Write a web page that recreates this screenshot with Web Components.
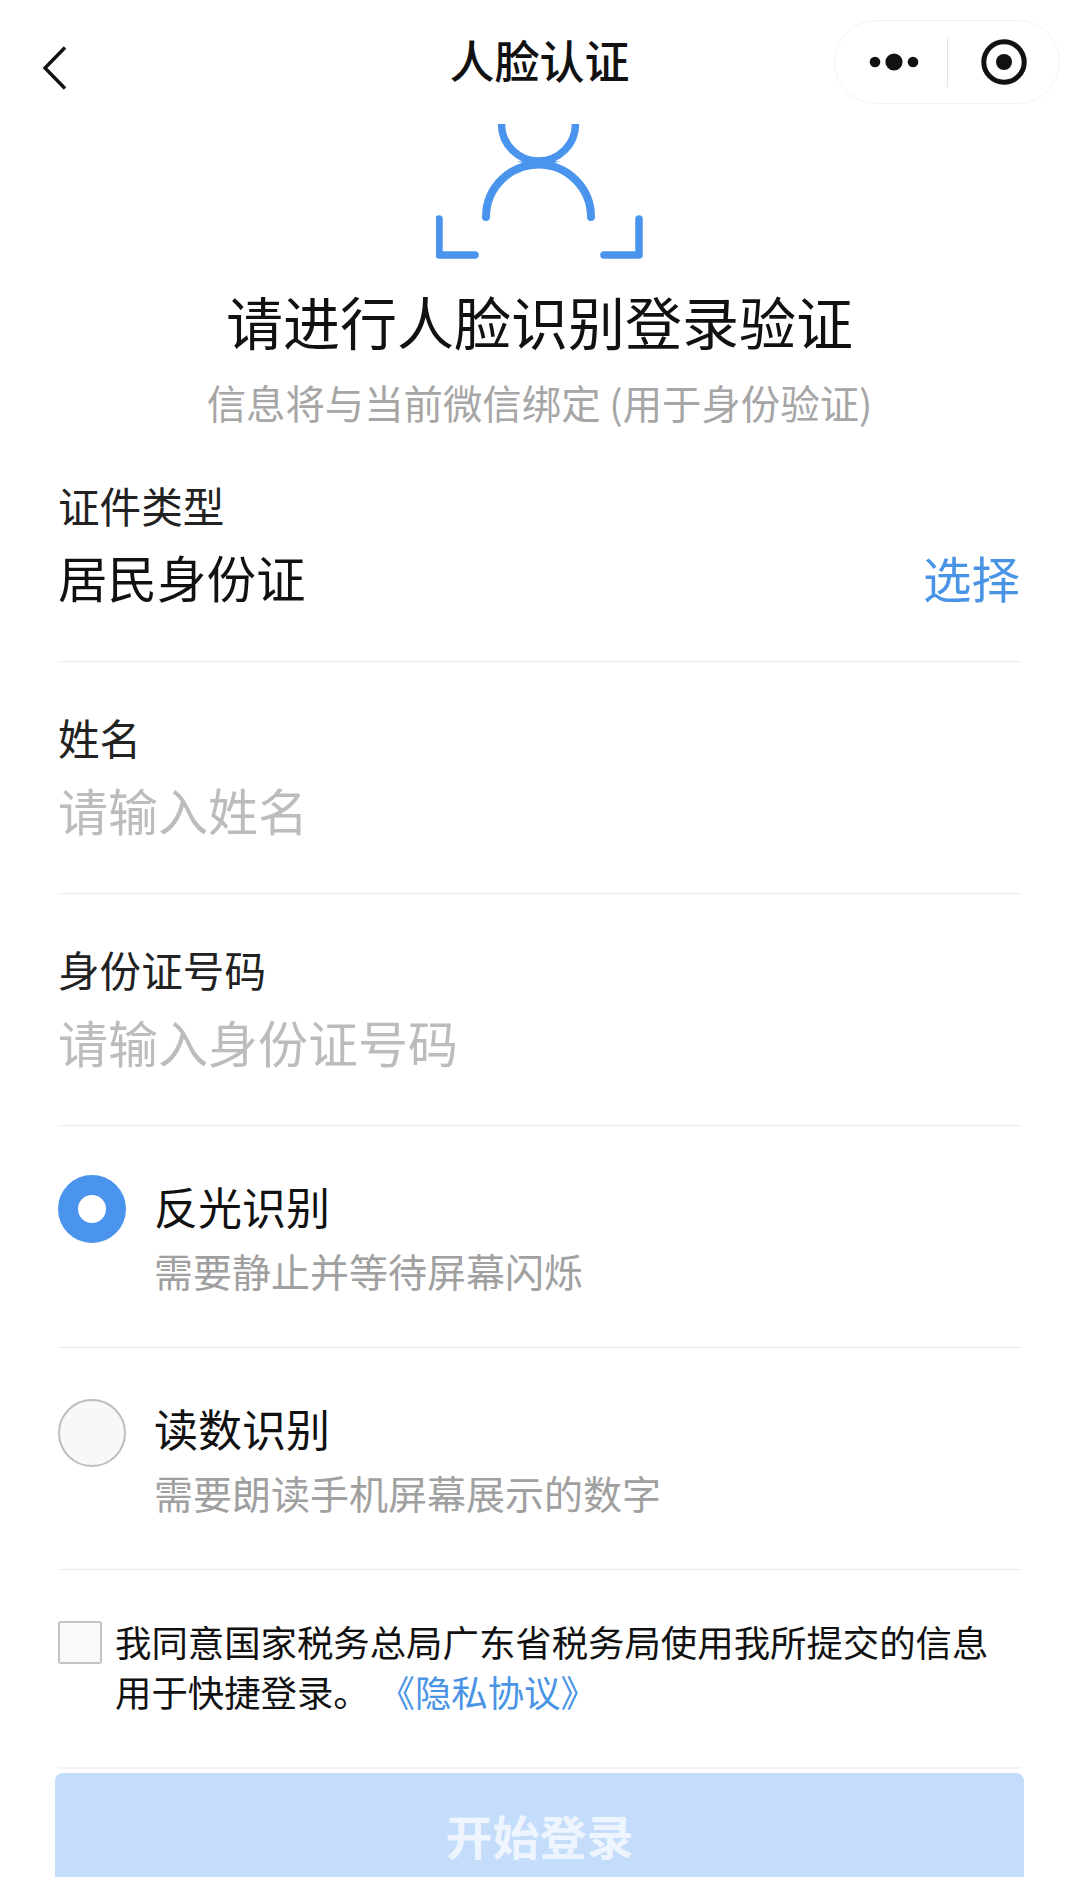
<!DOCTYPE html>
<html lang="zh">
<head>
<meta charset="utf-8">
<title>人脸认证</title>
<style>
  html, body { margin: 0; background: #fff; }
  body {
    height: 1877px;
    overflow: hidden;
    font-family: "Noto Sans CJK SC", "Liberation Sans", sans-serif;
    color: #111;
  }
</style>
</head>
<body>
<face-page>
  <nav-bar>人脸认证</nav-bar>
  <face-icon></face-icon>
  <page-heading sub="信息将与当前微信绑定 (用于身份验证)">请进行人脸识别登录验证</page-heading>
  <form-field label="证件类型" value="居民身份证" action="选择"></form-field>
  <form-field label="姓名" placeholder="请输入姓名"></form-field>
  <form-field label="身份证号码" placeholder="请输入身份证号码"></form-field>
  <radio-option checked sub="需要静止并等待屏幕闪烁">反光识别</radio-option>
  <radio-option sub="需要朗读手机屏幕展示的数字">读数识别</radio-option>
  <agree-row>我同意国家税务总局广东省税务局使用我所提交的信息<span slot="second">用于快捷登录。</span><a slot="link">《隐私协议》</a></agree-row>
  <login-button>开始登录</login-button>
</face-page>

<script>
class FacePage extends HTMLElement {
  constructor() {
    super();
    this.attachShadow({mode: 'open'});
    this.shadowRoot.innerHTML = `
      <style>
        :host { display: flex; flex-direction: column; width: 1079px; }
      </style>
      <slot></slot>
    `;
  }
}

class NavBar extends HTMLElement {
  constructor() {
    super();
    this.attachShadow({mode: 'open'});
    this.shadowRoot.innerHTML = `
      <style>
        :host {
          display: grid;
          grid-template-columns: 226px 1fr 226px;
          align-items: center;
          height: 124px;
          padding: 0 19px;
          box-sizing: border-box;
        }
        .back { display: block; margin: 11px 0 0 23px; }
        .title {
          justify-self: center;
          font-size: 45px;
          font-weight: 500;
          line-height: 60px;
          margin-bottom: 5px;
          color: #111;
        }
        .capsule {
          display: flex;
          align-items: center;
          box-sizing: border-box;
          width: 226px;
          height: 84px;
          border: 1px solid #f3f3f3;
          border-radius: 42px;
        }
        .half { flex: 1; display: flex; justify-content: center; align-items: center; }
        .half:first-child { flex: 0 0 112px; }
        .dots { margin-left: 6px; }
        .line { width: 1px; height: 49px; background: #e4e4e4; }
      </style>
      <svg class="back" width="26" height="44" viewBox="0 0 26 44">
        <path d="M23 1.5 L3 22 L23 42.5" fill="none" stroke="#111" stroke-width="3.4"/>
      </svg>
      <div class="title"><slot></slot></div>
      <div class="capsule">
        <div class="half">
          <svg class="dots" width="50" height="20" viewBox="0 0 50 20">
            <circle cx="6" cy="10" r="5.3" fill="#111"/>
            <circle cx="25" cy="10" r="8.6" fill="#111"/>
            <circle cx="44" cy="10" r="5.3" fill="#111"/>
          </svg>
        </div>
        <div class="line"></div>
        <div class="half">
          <svg width="48" height="48" viewBox="0 0 48 48">
            <circle cx="24" cy="24" r="20.2" fill="none" stroke="#111" stroke-width="5"/>
            <circle cx="24" cy="24" r="8" fill="#111"/>
          </svg>
        </div>
      </div>
    `;
  }
}

class FaceIcon extends HTMLElement {
  constructor() {
    super();
    this.attachShadow({mode: 'open'});
    this.shadowRoot.innerHTML = `
      <style>
        :host { display: flex; justify-content: center; height: 136px; }
      </style>
      <svg width="208" height="136" viewBox="1 0 208 136" fill="none" stroke="#4a94ee" stroke-linecap="round" stroke-linejoin="round">
        <path d="M66.5 -6 V0 A37 37 0 0 0 140.5 0 V-6" stroke-width="7.5"/>
        <path d="M51 93 A52.5 52.5 0 0 1 156 93" stroke-width="8"/>
        <path d="M81.5 37.5 Q90 37 95 36 L112 36 Q117 37 125.5 37.5 Q117 39 112 41 L95 41 Q90 39 81.5 37.5 Z" fill="#4a94ee" stroke="none"/>
        <path d="M4 95 V131 H40" stroke-width="7.5"/>
        <path d="M204 95 V131 H169" stroke-width="7.5"/>
      </svg>
    `;
  }
}

class PageHeading extends HTMLElement {
  constructor() {
    super();
    this.attachShadow({mode: 'open'});
    this.shadowRoot.innerHTML = `
      <style>
        :host { display: block; text-align: center; padding: 20px 0 3.5px; }
        h1 { margin: 0; font-size: 57px; font-weight: 400; line-height: 80px; color: #111; }
        p { margin: 16.5px 0 0; font-size: 39.4px; line-height: 50px; color: #a6a6a6; }
      </style>
      <h1><slot></slot></h1>
      <p></p>
    `;
    this.shadowRoot.querySelector('p').textContent = this.getAttribute('sub');
  }
}

class FormField extends HTMLElement {
  constructor() {
    super();
    this.attachShadow({mode: 'open'});
    this.shadowRoot.innerHTML = `
      <style>
        :host {
          display: block;
          margin: 0 58px;
          padding: 44.5px 0 49.5px;
          border-bottom: 1px solid #ececec;
        }
        .label { font-size: 41.6px; line-height: 60px; color: #222; }
        .row {
          display: flex;
          justify-content: space-between;
          align-items: center;
          margin-top: 7px;
          font-size: 49.5px;
          line-height: 70px;
        }
        .value { color: #111; }
        .value.empty { font-size: 50px; color: #bcbcbc; }
        .action { font-size: 48.5px; color: #4a94e6; margin-right: 1px; }
      </style>
      <div class="label"></div>
      <div class="row">
        <span class="value"></span>
        <span class="action"></span>
      </div>
    `;
    const root = this.shadowRoot;
    root.querySelector('.label').textContent = this.getAttribute('label');
    const value = root.querySelector('.value');
    if (this.hasAttribute('value')) {
      value.textContent = this.getAttribute('value');
    } else {
      value.textContent = this.getAttribute('placeholder');
      value.classList.add('empty');
    }
    root.querySelector('.action').textContent = this.getAttribute('action') || '';
  }
}

class RadioOption extends HTMLElement {
  constructor() {
    super();
    this.attachShadow({mode: 'open'});
    this.shadowRoot.innerHTML = `
      <style>
        :host {
          display: grid;
          grid-template-columns: 68px 1fr;
          column-gap: 28px;
          margin: 0 58px;
          padding: 50px 0 52px;
          border-bottom: 1px solid #ececec;
        }
        .dot {
          box-sizing: border-box;
          width: 68px;
          height: 68px;
          margin-top: 1px;
          border-radius: 50%;
          border: 2px solid #bdbdbd;
          background: #f8f8f8;
        }
        :host([checked]) .dot {
          margin-top: -1px;
          border: 20px solid #4a94ee;
          background: #fff;
        }
        .title { font-size: 44px; line-height: 60px; color: #111; }
        .sub { margin-top: 9px; font-size: 39px; line-height: 50px; color: #a0a0a0; }
      </style>
      <div class="dot"></div>
      <div>
        <div class="title"><slot></slot></div>
        <div class="sub"></div>
      </div>
    `;
    this.shadowRoot.querySelector('.sub').textContent = this.getAttribute('sub');
  }
}

class AgreeRow extends HTMLElement {
  constructor() {
    super();
    this.attachShadow({mode: 'open'});
    this.shadowRoot.innerHTML = `
      <style>
        :host {
          display: flex;
          align-items: flex-start;
          margin: 0 58px;
          padding-top: 46px;
          height: 199px;
          box-sizing: border-box;
          border-bottom: 2px solid #f2f2f2;
        }
        .box {
          flex: none;
          box-sizing: border-box;
          width: 44px;
          height: 43px;
          margin-top: 5px;
          border: 2px solid #c4c4c4;
          border-radius: 3px;
          background: #f9f9f9;
        }
        .text {
          margin-left: 13px;
          font-size: 36.4px;
          line-height: 50px;
          color: #111;
        }
        .line { white-space: nowrap; }
        ::slotted(a) { color: #4a94e6; margin-left: 27px; }
      </style>
      <div class="box"></div>
      <div class="text">
        <div class="line"><slot></slot></div>
        <div class="line"><slot name="second"></slot><slot name="link"></slot></div>
      </div>
    `;
  }
}

class LoginButton extends HTMLElement {
  constructor() {
    super();
    this.attachShadow({mode: 'open'});
    this.shadowRoot.innerHTML = `
      <style>
        :host {
          display: block;
          margin: 4px 55px 0;
          padding-top: 29px;
          height: 140px;
          box-sizing: border-box;
          border-radius: 8px 8px 0 0;
          background: #c3ddfa;
          color: #eef5fe;
          font-size: 47px;
          font-weight: 700;
          line-height: 66px;
          text-align: center;
        }
      </style>
      <slot></slot>
    `;
  }
}

customElements.define('face-page', FacePage);
customElements.define('nav-bar', NavBar);
customElements.define('face-icon', FaceIcon);
customElements.define('page-heading', PageHeading);
customElements.define('form-field', FormField);
customElements.define('radio-option', RadioOption);
customElements.define('agree-row', AgreeRow);
customElements.define('login-button', LoginButton);
</script>
</body>
</html>
